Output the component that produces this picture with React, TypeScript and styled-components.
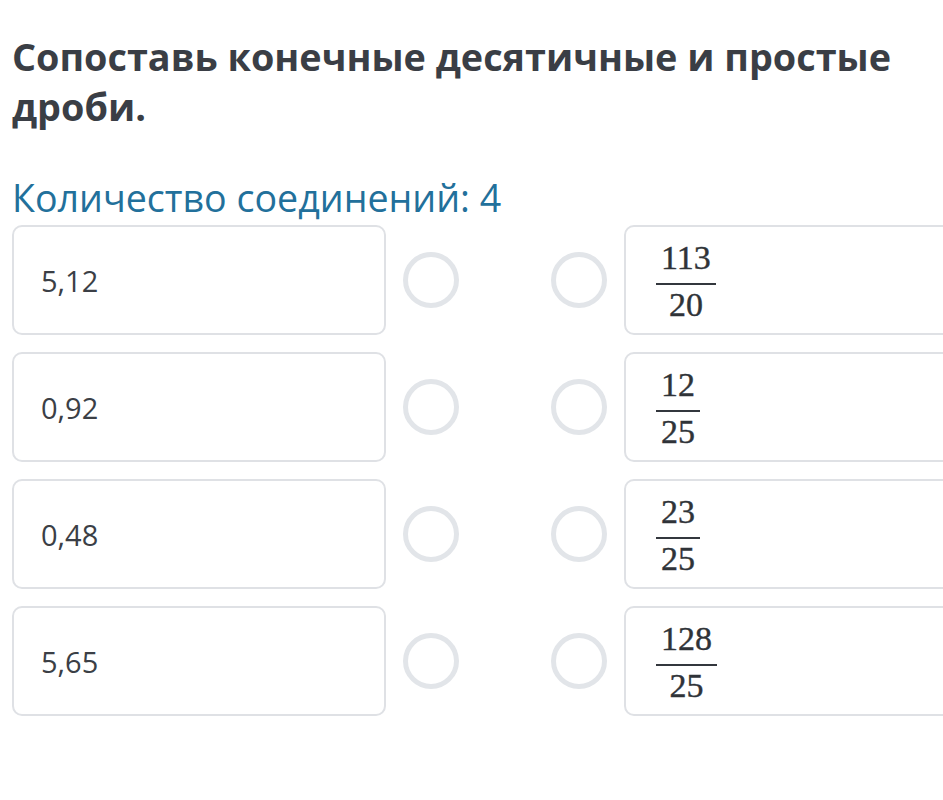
import styled, { createGlobalStyle } from "styled-components";

const GlobalStyle = createGlobalStyle`
  html, body {
    margin: 0;
    padding: 0;
    background: #ffffff;
    overflow: hidden;
  }
  body {
    font-family: "Open Sans", "Liberation Sans", sans-serif;
  }
`;

const Page = styled.div`
  width: 943px;
  height: 800px;
  padding: 32px 0 0 12px;
  box-sizing: border-box;
  overflow: hidden;
`;

const Title = styled.h1`
  margin: 0;
  font-size: 37.8px;
  line-height: 50px;
  font-weight: 700;
  color: #3a3e45;
  width: 920px;
`;

const Counter = styled.div`
  margin-top: 46px;
  font-size: 37.6px;
  line-height: 40px;
  color: #22709b;
`;

const Rows = styled.div`
  margin-top: 7px;
  display: flex;
  flex-direction: column;
  gap: 17px;
`;

const Row = styled.div`
  display: flex;
  align-items: center;
`;

const Card = styled.div<{ $side: "left" | "right" }>`
  flex: none;
  width: 374px;
  height: 110px;
  box-sizing: border-box;
  border: 2px solid #dfe1e5;
  border-radius: 10px;
  background: #fff;
  display: flex;
  align-items: center;
  padding-left: ${(p) => (p.$side === "left" ? "27px" : "30px")};
  margin-right: ${(p) => (p.$side === "left" ? "17px" : "0")};
  margin-left: ${(p) => (p.$side === "right" ? "17px" : "0")};
`;

const Decimal = styled.span`
  font-size: 29px;
  color: #3b3f46;
  line-height: 1;
`;

const Dot = styled.div<{ $gapRight?: boolean }>`
  flex: none;
  width: 56px;
  height: 56px;
  box-sizing: border-box;
  border-radius: 50%;
  border: 5px solid #e2e5e9;
  margin-right: ${(p) => (p.$gapRight ? "92px" : "0")};
`;

const Fraction = styled.div`
  display: inline-flex;
  flex-direction: column;
  align-items: stretch;
  margin-top: 2px;
  font-family: "Liberation Serif", "DejaVu Serif", serif;
  color: #2f3338;
  -webkit-text-stroke: 0.4px #2f3338;
`;

const Num = styled.span`
  font-size: 34px;
  line-height: 34px;
  text-align: center;
  padding: 0 5px;
`;

const Bar = styled.span`
  height: 2px;
  background: #33373d;
  margin: 8px 0 3px;
`;

const Den = styled(Num)``;

const pairs = [
  { left: "5,12", num: "113", den: "20" },
  { left: "0,92", num: "12", den: "25" },
  { left: "0,48", num: "23", den: "25" },
  { left: "5,65", num: "128", den: "25" },
];

export default function App() {
  return (
    <Page>
      <GlobalStyle />
      <Title>Сопоставь конечные десятичные и простые дроби.</Title>
      <Counter>Количество соединений: 4</Counter>
      <Rows>
        {pairs.map((p) => (
          <Row key={p.left}>
            <Card $side="left">
              <Decimal>{p.left}</Decimal>
            </Card>
            <Dot $gapRight />
            <Dot />
            <Card $side="right">
              <Fraction>
                <Num>{p.num}</Num>
                <Bar />
                <Den>{p.den}</Den>
              </Fraction>
            </Card>
          </Row>
        ))}
      </Rows>
    </Page>
  );
}
